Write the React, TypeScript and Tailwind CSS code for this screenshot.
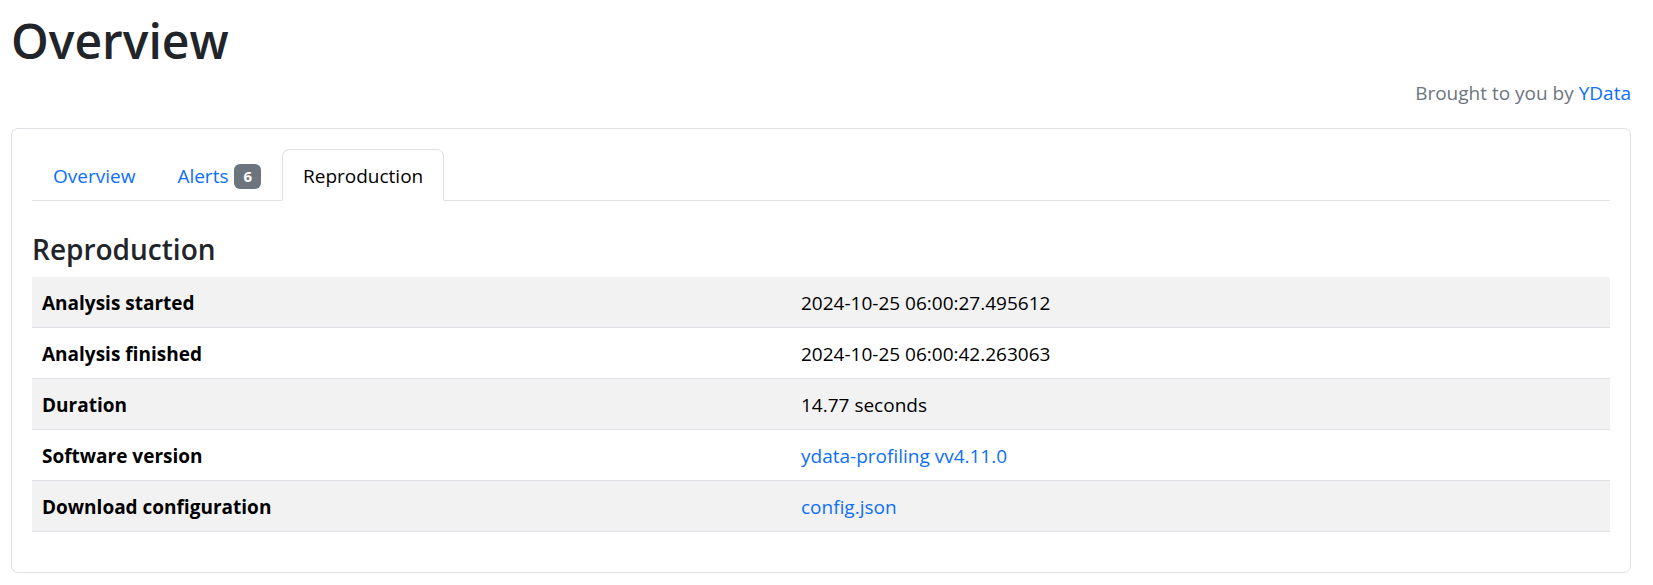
import React from "react";

const rows = [
  { label: "Analysis started", value: "2024-10-25 06:00:27.495612" },
  { label: "Analysis finished", value: "2024-10-25 06:00:42.263063" },
  { label: "Duration", value: "14.77 seconds" },
  { label: "Software version", value: "ydata-profiling vv4.11.0", link: true },
  { label: "Download configuration", value: "config.json", link: true },
];

const App = () => {
  return (
    <div className="min-h-screen bg-white pl-[11px] pr-[22px] font-['Open_Sans',sans-serif] text-[19px] text-[#212529]">
      <h1 className="pt-[8px] text-[48px] leading-[65px] font-semibold text-[#212529]">Overview</h1>

      <div className="mt-[5px] text-right leading-[30px] text-[#6c757d]">
        Brought to you by <a className="text-[#0d6efd]">YData</a>
      </div>

      <div className="mt-[20px] rounded-[7px] border border-[#dee2e6] p-[20px]">
        <ul className="flex border-b border-[#dee2e6]">
          <li className="-mb-px px-[20px] pt-[11px] pb-[9px] border border-transparent leading-[30px] text-[#0d6efd]">Overview</li>
          <li className="-mb-px px-[20px] pt-[11px] pb-[9px] border border-transparent leading-[30px] text-[#0d6efd]">
            Alerts{" "}
            <span className="ml-[1px] inline-block rounded-[6px] bg-[#6c757d] px-[9px] py-[3px] align-[1px] text-[15px] leading-[19px] font-bold text-white">
              6
            </span>
          </li>
          <li className="-mb-px rounded-t-[7px] border border-[#dee2e6] border-b-white bg-white px-[20px] pt-[11px] pb-[9px] leading-[30px] text-black">
            Reproduction
          </li>
        </ul>

        <h4 className="pt-[30px] mb-[10px] text-[28px] leading-[36px] font-semibold text-[#212529]">Reproduction</h4>

        <table className="mb-[20px] w-full border-collapse text-black">
          <tbody>
            {rows.map((r, i) => (
              <tr key={r.label} className={`border-b border-[#dee2e6] ${i % 2 === 0 ? "bg-[#f2f2f2]" : "bg-white"}`}>
                <th className="w-[759px] px-[10px] pt-[11px] pb-[9px] text-left leading-[30px] font-bold">{r.label}</th>
                <td className="px-[10px] pt-[11px] pb-[9px] leading-[30px]">
                  {r.link ? <a className="text-[#0d6efd]">{r.value}</a> : r.value}
                </td>
              </tr>
            ))}
          </tbody>
        </table>
      </div>
    </div>
  );
};

export default App;
